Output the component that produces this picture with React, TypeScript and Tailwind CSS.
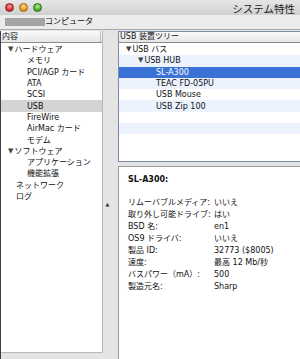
import React from "react";

const FONT = { fontFamily: '"DejaVu Sans", "Noto Sans CJK JP", sans-serif' };

function Tri() {
  return <span className="inline-block text-[7px] leading-none mr-[1px] text-[#444]">▼</span>;
}

const leftRows: { label: string; indent: number; tri?: boolean; sel?: boolean }[] = [
  { label: "ハードウェア", indent: 8, tri: true },
  { label: "メモリ", indent: 27 },
  { label: "PCI/AGP カード", indent: 27 },
  { label: "ATA", indent: 27 },
  { label: "SCSI", indent: 27 },
  { label: "USB", indent: 27, sel: true },
  { label: "FireWire", indent: 27 },
  { label: "AirMac カード", indent: 27 },
  { label: "モデム", indent: 27 },
  { label: "ソフトウェア", indent: 8, tri: true },
  { label: "アプリケーション", indent: 27 },
  { label: "機能拡張", indent: 27 },
  { label: "ネットワーク", indent: 16 },
  { label: "ログ", indent: 16 },
];

const treeRows: { label: string; indent: number; tri?: boolean; sel?: boolean }[] = [
  { label: "USB バス", indent: 7, tri: true },
  { label: "USB HUB", indent: 19, tri: true },
  { label: "SL-A300", indent: 37, sel: true },
  { label: "TEAC FD-05PU", indent: 37 },
  { label: "USB Mouse", indent: 37 },
  { label: "USB Zip 100", indent: 37 },
  { label: "", indent: 0 },
  { label: "", indent: 0 },
  { label: "", indent: 0 },
];

const info: [string, string][] = [
  ["リムーバブルメディア:", "いいえ"],
  ["取り外し可能ドライブ:", "はい"],
  ["BSD 名:", "en1"],
  ["OS9 ドライバ:", "いいえ"],
  ["製品 ID:", "32773 ($8005)"],
  ["速度:", "最高 12 Mb/秒"],
  ["バスパワー（mA）:", "500"],
  ["製造元名:", "Sharp"],
];

export default function App() {
  return (
    <div
      className="w-[300px] h-[359px] overflow-hidden bg-[#e4e4e4] flex flex-col text-[#111]"
      style={FONT}
    >
      {/* title bar */}
      <div className="h-[15px] flex items-center bg-gradient-to-b from-[#e6e6e6] to-[#cfcfcf] pl-[5px] pr-[5px] shrink-0">
        <div className="flex gap-[5px]">
          <span className="w-[9px] h-[9px] rounded-full bg-[radial-gradient(circle_at_50%_35%,#ff9a9a,#d02020_70%)] border border-[#8a2020]" />
          <span className="w-[9px] h-[9px] rounded-full bg-[radial-gradient(circle_at_50%_35%,#ffe08a,#e09010_70%)] border border-[#a06010]" />
          <span className="w-[9px] h-[9px] rounded-full bg-[radial-gradient(circle_at_50%_35%,#b8f090,#3ca020_70%)] border border-[#2a7010]" />
        </div>
        <div className="ml-auto text-[10.5px] leading-none text-[#222] mt-[3px]">システム特性</div>
      </div>
      {/* toolbar row */}
      <div className="h-[15px] flex items-center bg-[#ebebeb] pl-[5px] shrink-0 border-b border-[#a8a8a8]">
        <div className="w-[40px] h-[8px] bg-[#a4a4a4]" />
        <div className="text-[8px] leading-none">コンピュータ</div>
      </div>
      {/* main */}
      <div className="flex flex-1 min-h-0 pt-[1px]">
        {/* left pane */}
        <div className="w-[103px] shrink-0 flex flex-col pb-[6px] border-l border-[#3a3f55]">
          <div className="flex-1 flex flex-col bg-white border-r border-b border-[#b8b8b8]">
            <div className="h-[12px] flex items-center bg-gradient-to-b from-[#fafafa] to-[#e6e6e6] border-b border-[#8c8c8c] shrink-0">
              <div className="flex-1 text-[8px] leading-none pl-[1px]">内容</div>
              <div className="w-[2px] h-full border-l border-[#c0c0c0]" />
            </div>
            <div className="pt-[1px]">
              {leftRows.map((r, i) => (
                <div
                  key={i}
                  className={`h-[11.3px] flex items-center text-[8px] leading-[11px] whitespace-nowrap ${r.sel ? "bg-[#d4d4d4]" : ""}`}
                  style={{ paddingLeft: r.indent - 1 }}
                >
                  {r.tri && <Tri />}
                  {r.label}
                </div>
              ))}
            </div>
          </div>
        </div>
        {/* splitter */}
        <div className="w-[15px] shrink-0 flex flex-col items-center">
          <div className="h-[171px]" />
          <div className="text-[5px] leading-none text-[#333] ml-[-6px]">▲</div>
        </div>
        {/* right column */}
        <div className="flex-1 min-w-0 flex flex-col">
          <div className="h-[131px] shrink-0 bg-white border-l border-t border-b border-[#7a8aa8] flex flex-col">
            <div className="h-[11px] flex items-center bg-gradient-to-b from-[#fafafa] to-[#e6e6e6] border-b border-[#8c8c8c] shrink-0">
              <div className="text-[8px] leading-none pl-[1px] whitespace-nowrap">USB 装置ツリー</div>
            </div>
            <div className="pt-[1px]">
              {treeRows.map((r, i) => (
                <div
                  key={i}
                  className={`h-[11.3px] flex items-center text-[8px] leading-[11px] whitespace-nowrap ${
                    r.sel ? "bg-[#3a72d6] text-white" : i % 2 === 1 ? "bg-[#edf3fe]" : ""
                  }`}
                  style={{ paddingLeft: r.indent }}
                >
                  {r.tri && <Tri />}
                  {r.label}
                </div>
              ))}
            </div>
          </div>
          <div className="h-[4px] shrink-0" />
          <div className="flex-1 bg-white border-l border-t border-[#9a9a9a] pl-[9px]">
            <div className="text-[8px] leading-none font-bold mt-[9px]">SL-A300:</div>
            <div className="mt-[12px] flex flex-col">
              {info.map(([k, v], i) => (
                <div key={i} className="h-[12px] flex items-center text-[8px] leading-[11px] whitespace-nowrap">
                  <div className="w-[86px] shrink-0">{k}</div>
                  <div>{v}</div>
                </div>
              ))}
            </div>
          </div>
        </div>
      </div>
    </div>
  );
}
